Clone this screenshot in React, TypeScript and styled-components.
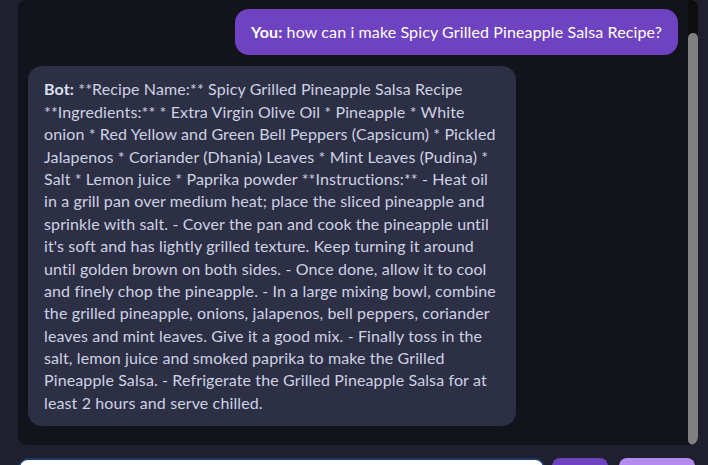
import { useLayoutEffect, useRef } from "react";
import styled, { createGlobalStyle } from "styled-components";

const GlobalStyle = createGlobalStyle`
	html, body {
		margin: 0;
		padding: 0;
		background: #1f1f2e;
		overflow: hidden;
	}
	* {
		box-sizing: border-box;
	}
`;

const Page = styled.div`
	height: 100vh;
	padding: 0 10px 0 18px;
	display: flex;
	flex-direction: column;
	gap: 13px;
	font-family: Lato, "Open Sans", sans-serif;
`;

const ChatFrame = styled.div`
	position: relative;
	height: 445px;
	flex-shrink: 0;
	background: #13131b;
	border-radius: 8px;
	overflow: hidden;
`;

const ChatScroll = styled.div`
	height: 100%;
	overflow-y: auto;
	padding: 45px 20px 19px 10px;
	display: flex;
	flex-direction: column;
	gap: 11px;
	scrollbar-width: none;

	&::-webkit-scrollbar {
		display: none;
	}
`;

const ScrollTrack = styled.div`
	position: absolute;
	top: 0;
	right: 0;
	bottom: 0;
	width: 10px;
	background: #0e0e0e;
	padding-top: 33px;
	display: flex;
`;

const ScrollThumb = styled.div`
	flex: 1;
	background: #808080;
	border-radius: 5px;
`;

const Bubble = styled.div<{ $mine?: boolean }>`
	align-self: ${(p) => (p.$mine ? "flex-end" : "flex-start")};
	max-width: 75%;
	padding: 12px 16px;
	border-radius: 14px;
	font-size: 16px;
	line-height: 1.4;
	letter-spacing: 0.12px;
	background: ${(p) => (p.$mine ? "#6f42c1" : "#2d2f45")};
	color: ${(p) => (p.$mine ? "#ffffff" : "#cdd2e4")};
	flex-shrink: 0;

	b {
		font-weight: 700;
		color: ${(p) => (p.$mine ? "#ffffff" : "#dde1ef")};
	}
`;

const InputRow = styled.form`
	display: flex;
	align-items: stretch;
	padding-right: 3px;
`;

const TextInput = styled.input`
	flex: 1;
	height: 40px;
	border: 2px solid #1e3a6a;
	border-radius: 10px;
	background: #ffffff;
	padding: 0 12px;
	font: inherit;
	font-size: 15px;
	margin-right: 7px;
`;

const Button = styled.button<{ $tone: string; $w: number }>`
	width: ${(p) => p.$w}px;
	height: 40px;
	border: none;
	border-radius: 8px;
	background: ${(p) => p.$tone};
	color: #ffffff;
	font: inherit;
	font-weight: 700;
	font-size: 15px;
	margin-left: ${(p) => (p.$w > 60 ? "11px" : "0")};
`;

const botText =
	"**Recipe Name:** Spicy Grilled Pineapple Salsa Recipe **Ingredients:** * Extra Virgin Olive Oil * Pineapple * White onion * Red Yellow and Green Bell Peppers (Capsicum) * Pickled Jalapenos * Coriander (Dhania) Leaves * Mint Leaves (Pudina) * Salt * Lemon juice * Paprika powder **Instructions:** - Heat oil in a grill pan over medium heat; place the sliced pineapple and sprinkle with salt. - Cover the pan and cook the pineapple until it's soft and has lightly grilled texture. Keep turning it around until golden brown on both sides. - Once done, allow it to cool and finely chop the pineapple. - In a large mixing bowl, combine the grilled pineapple, onions, jalapenos, bell peppers, coriander leaves and mint leaves. Give it a good mix. - Finally toss in the salt, lemon juice and smoked paprika to make the Grilled Pineapple Salsa. - Refrigerate the Grilled Pineapple Salsa for at least 2 hours and serve chilled.";

export default function App() {
	const boxRef = useRef<HTMLDivElement>(null);

	useLayoutEffect(() => {
		if (boxRef.current) boxRef.current.scrollTop = boxRef.current.scrollHeight;
	}, []);

	return (
		<>
			<GlobalStyle />
			<Page>
				<ChatFrame>
					<ChatScroll ref={boxRef}>
						<Bubble $mine>
							<b>You:</b> how can i make Spicy Grilled Pineapple Salsa Recipe?
						</Bubble>
						<Bubble>
							<b>Bot:</b> {botText}
						</Bubble>
					</ChatScroll>
					<ScrollTrack>
						<ScrollThumb />
					</ScrollTrack>
				</ChatFrame>
				<InputRow onSubmit={(e) => e.preventDefault()}>
					<TextInput placeholder="Type your message..." />
					<Button $tone="#6f42c1" $w={56}>
						Send
					</Button>
					<Button $tone="#b48cf0" $w={76}>
						Clear
					</Button>
				</InputRow>
			</Page>
		</>
	);
}
